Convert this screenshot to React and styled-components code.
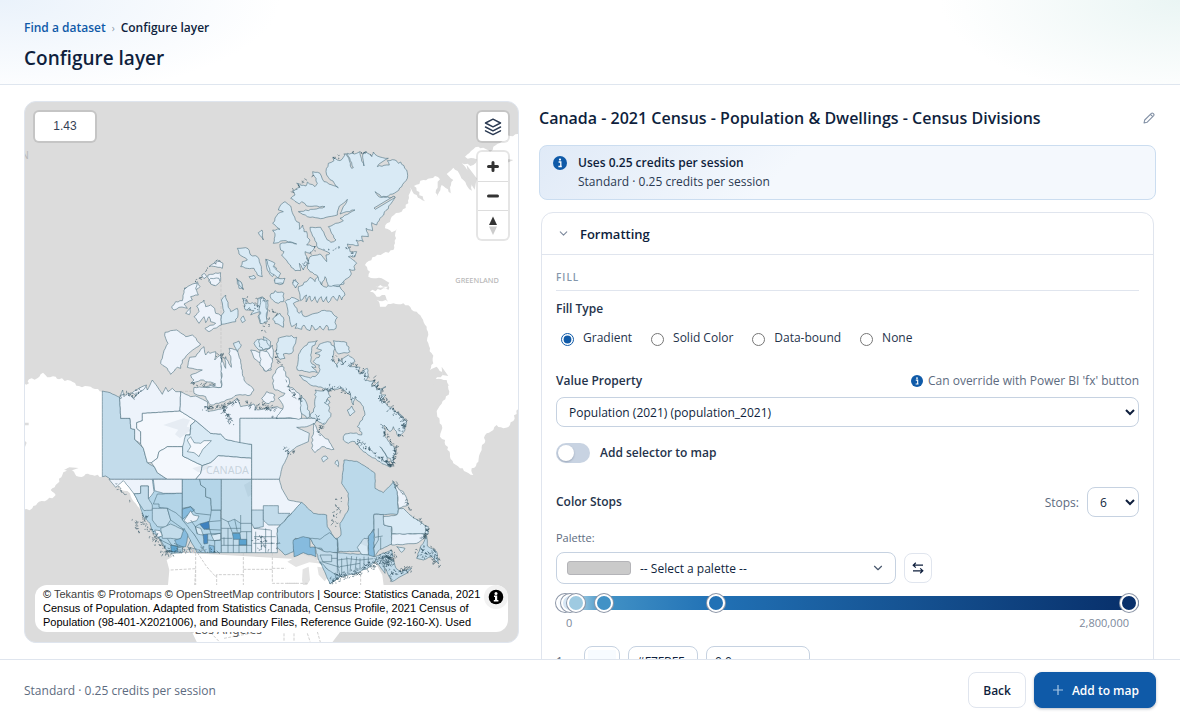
import { useState } from 'react'
import styled, { createGlobalStyle } from 'styled-components'
import { ChevronDown } from 'lucide-react'

const GlobalStyle = createGlobalStyle`
    * {
        box-sizing: border-box;
    }
    body {
        margin: 0;
        background: #ffffff;
        color: #0f1f3d;
        font-family: 'Open Sans', 'Noto Sans', sans-serif;
        font-size: 12px;
    }
    button,
    input,
    select {
        font-family: inherit;
        font-size: inherit;
        color: inherit;
    }
`

const Page = styled.div`
    display: flex;
    flex-direction: column;
    height: 100vh;
    overflow: hidden;
`

const Header = styled.header`
    flex: none;
    padding: 19px 24px 12px;
    border-bottom: 1px solid #dfe6ef;
    background:
        radial-gradient(ellipse 280px 100px at 0 0, #eaf2fb, transparent),
        radial-gradient(ellipse 240px 100px at 100% 0, #eaf5f4, transparent),
        #ffffff;
`

const Breadcrumb = styled.nav`
    display: flex;
    gap: 6px;
    line-height: 18px;
    font-weight: 600;
`

const BreadcrumbLink = styled.a`
    color: #0f5aa8;
    text-decoration: none;
`

const BreadcrumbMark = styled.span`
    color: #8b98aa;
    font-size: 10px;
    font-weight: 400;
`

const PageTitle = styled.h1`
    margin: 7px 0 0;
    font-size: 19px;
    line-height: 28px;
    font-weight: 600;
`

const Main = styled.main`
    flex: 1;
    min-height: 0;
    display: grid;
    grid-template-columns: 495fr 617fr;
    gap: 20px;
    padding: 16px 24px 0;
`

const MapFrame = styled.section`
    position: relative;
    margin-bottom: 16px;
    border: 1px solid #dfe5ee;
    border-radius: 12px;
    overflow: hidden;
    background: #dcdcdc;
`

const MapDrawing = styled.svg`
    display: block;
    position: absolute;
    inset: 0;
    width: 100%;
    height: 100%;
`

const ZoomReadout = styled.output`
    position: absolute;
    top: 10px;
    left: 10px;
    width: 60px;
    border-radius: 4px;
    box-shadow: 0 0 0 2px #c5c5c5;
    background: #ffffff;
    color: #334155;
    font: 12px/29px 'Liberation Sans', Arial, sans-serif;
    text-align: center;
`

const MapControls = styled.div`
    position: absolute;
    top: 10px;
    right: 10px;
    display: flex;
    flex-direction: column;
    gap: 11px;
`

const ControlGroup = styled.div`
    display: flex;
    flex-direction: column;
    border-radius: 4px;
    background: #ffffff;
    box-shadow: 0 0 0 2px rgba(0, 0, 0, 0.1);
`

const ControlButton = styled.button`
    display: flex;
    align-items: center;
    justify-content: center;
    width: 30px;
    height: 29px;
    padding: 0;
    border: 0;
    background: transparent;
    & + & {
        border-top: 1px solid #dddddd;
    }
`

const Attribution = styled.div`
    position: absolute;
    left: 10px;
    right: 10px;
    bottom: 10px;
    height: 47px;
    padding: 2px 24px 2px 8px;
    border-radius: 12px;
    background: #ffffff;
    color: #000000;
    font: 11px/14px 'Liberation Sans', Arial, sans-serif;
    overflow: hidden;
    a {
        color: #404040;
        text-decoration: none;
    }
`

const AttributionToggle = styled.button`
    position: absolute;
    top: 0;
    right: 0;
    width: 24px;
    height: 24px;
    padding: 4px;
    border: 0;
    border-radius: 12px;
    background: #f2f2f2;
    svg {
        display: block;
    }
`

const Settings = styled.section`
    min-height: 0;
    overflow-y: auto;
    scrollbar-width: none;
`

const LayerHeading = styled.div`
    display: flex;
    align-items: center;
    justify-content: space-between;
    height: 34px;
`

const LayerTitle = styled.h2`
    margin: 0;
    font-size: 16px;
    line-height: 24px;
    font-weight: 600;
    white-space: nowrap;
`

const IconButton = styled.button`
    display: flex;
    padding: 1px;
    border: 0;
    background: transparent;
    color: #8290a5;
`

const CreditCard = styled.div`
    display: flex;
    gap: 11px;
    margin-top: 10px;
    padding: 7px 13px 8px;
    border: 1px solid #cbddf0;
    border-radius: 8px;
    background: linear-gradient(135deg, #e0eaf7, #f4f8fd 40%);
    line-height: 19px;
`

const CreditIcon = styled.span`
    display: flex;
    align-items: center;
    height: 19px;
`

const CreditTitle = styled.div`
    font-weight: 600;
`

const CreditText = styled.div`
    color: #2b3a52;
`

const Panel = styled.section`
    margin: 12px 2px 0;
    border: 1px solid #e0e5ee;
    border-radius: 12px;
`

const PanelToggle = styled.button`
    display: flex;
    align-items: center;
    gap: 10px;
    width: 100%;
    height: 42px;
    padding: 0 15px;
    border: 0;
    border-bottom: 1px solid #e0e5ee;
    background: transparent;
    font-size: 13px;
    font-weight: 600;
    svg {
        color: #7d8a9d;
    }
`

const PanelBody = styled.div`
    padding: 14px 14px 0;
`

const GroupTitle = styled.h3`
    margin: 0 0 8px;
    padding-bottom: 5px;
    border-bottom: 1px solid #e0e5ee;
    color: #8496ab;
    font-size: 10px;
    line-height: 16px;
    font-weight: 600;
    letter-spacing: 1px;
`

const Label = styled.label`
    display: block;
    color: #25334b;
    line-height: 20px;
    font-weight: 600;
`

const FillTypes = styled.fieldset`
    display: flex;
    gap: 14px;
    margin: 0;
    padding: 0;
    border: 0;
`

const Legend = styled.legend`
    padding: 0;
    color: #25334b;
    line-height: 20px;
    font-weight: 600;
`

const RadioLabel = styled.label`
    display: flex;
    gap: 9px;
    margin-top: 9px;
    padding-left: 5px;
    line-height: 20px;
    color: #25334b;
`

const Radio = styled.input`
    width: 13px;
    height: 13px;
    margin: 5px 0 0;
    accent-color: #0f5aa8;
`

const FieldRow = styled.div`
    display: flex;
    align-items: center;
    justify-content: space-between;
    margin-top: ${(props) => props.$top}px;
`

const Hint = styled.span`
    display: flex;
    align-items: center;
    gap: 5px;
    color: #5d6b80;
    line-height: 20px;
`

const Select = styled.select`
    width: ${(props) => (props.$small ? '52px' : '100%')};
    height: 30px;
    padding: 0 4px 0 8px;
    border: 1px solid #c6d2e1;
    border-radius: 8px;
    background: #ffffff;
    color: #0f1f3d;
`

const SwitchLabel = styled.label`
    display: flex;
    align-items: center;
    gap: 10px;
    margin-top: 16px;
    color: #25334b;
    line-height: 20px;
    font-weight: 600;
`

const Switch = styled.input`
    appearance: none;
    display: flex;
    width: 34px;
    height: 20px;
    margin: 0;
    padding: 2px;
    border-radius: 10px;
    background: ${(props) => (props.checked ? '#0f5aa8' : '#c8d3e2')};
    &::before {
        content: '';
        width: 16px;
        height: 16px;
        margin-left: ${(props) => (props.checked ? '14px' : '0')};
        border-radius: 50%;
        background: #ffffff;
        box-shadow: 0 1px 2px rgba(15, 31, 61, 0.25);
    }
`

const StopsLabel = styled.label`
    display: flex;
    align-items: center;
    gap: 8px;
    color: #5d6b80;
`

const PaletteLabel = styled.div`
    margin-top: 12px;
    color: #5d6b80;
    font-size: 11px;
    line-height: 18px;
`

const PaletteRow = styled.div`
    display: flex;
    align-items: center;
    gap: 8px;
    margin-top: 5px;
`

const PaletteButton = styled.button`
    display: flex;
    align-items: center;
    gap: 9px;
    width: 340px;
    height: 32px;
    padding: 0 10px;
    border: 1px solid #c6d2e1;
    border-radius: 8px;
    background: #ffffff;
    text-align: left;
    svg {
        margin-left: auto;
        color: #4a586e;
    }
`

const PaletteSwatch = styled.span`
    width: 64px;
    height: 14px;
    border: 1px solid #b4b4b8;
    border-radius: 3px;
    background: #cacaca;
`

const SwapButton = styled.button`
    display: flex;
    align-items: center;
    justify-content: center;
    width: 28px;
    height: 30px;
    padding: 0;
    border: 1px solid #e0e5ee;
    border-radius: 8px;
    background: #ffffff;
`

const GradientTrack = styled.div`
    position: relative;
    height: 14px;
    margin: 12px 0 0;
    border-radius: 7px;
    background: linear-gradient(
        90deg,
        #f7fbff 2%,
        #9ecae1 4%,
        #4292c6 8%,
        #2171b5 27%,
        #08306b 98%
    );
`

const StopHandle = styled.button`
    position: absolute;
    top: -2px;
    width: 18px;
    height: 18px;
    margin-left: -9px;
    padding: 0;
    border: 2px solid #ffffff;
    border-radius: 50%;
    box-shadow: 0 0 0 1px #8d97a8;
`

const TrackScale = styled.div`
    display: flex;
    justify-content: space-between;
    margin-top: 5px;
    padding: 0 10px;
    color: #7c899b;
    font-size: 11px;
    line-height: 16px;
`

const StopRow = styled.div`
    display: grid;
    grid-template-columns: 20px 36px 70px 104px;
    gap: 8px;
    align-items: center;
    margin-top: 15px;
    padding-bottom: 12px;
    color: #5d6b80;
`

const StopInput = styled.input`
    width: 100%;
    height: 30px;
    padding: ${(props) => (props.type === 'color' ? '3px' : '0 8px')};
    border: 1px solid #c6d2e1;
    border-radius: 8px;
    background: #ffffff;
    color: #0f1f3d;
    &::-webkit-color-swatch-wrapper {
        padding: 0;
    }
    &::-webkit-color-swatch {
        border: 0;
    }
`

const Footer = styled.footer`
    flex: none;
    display: flex;
    align-items: center;
    gap: 8px;
    height: 61px;
    padding: 0 24px;
    border-top: 1px solid #dfe5ee;
    background: #ffffff;
`

const FooterText = styled.span`
    margin-right: auto;
    color: #5d6b80;
`

const FooterButton = styled.button`
    display: flex;
    align-items: center;
    gap: 9px;
    height: 36px;
    padding: ${(props) => (props.$primary ? '0 16px' : '0 14px')};
    border: 1px solid ${(props) => (props.$primary ? '#0f5aa8' : '#e0e5ee')};
    border-radius: 8px;
    background: ${(props) => (props.$primary ? '#0f5aa8' : '#ffffff')};
    color: ${(props) => (props.$primary ? '#ffffff' : '#0f1f3d')};
    box-shadow: ${(props) =>
        props.$primary ? '0 1px 3px rgba(15, 31, 61, 0.3)' : 'none'};
    font-weight: 600;
    svg {
        margin-left: 2px;
    }
`

const PALE = '#f4f8fd'
const LIGHT = '#edf3fb'
const SOFT = '#d9eaf5'
const MILD = '#c3dceb'
const MID = '#b4d5e8'
const DEEP = '#86bbde'
const STRONG = '#5ba3d0'

// small repeatable generator so the coast never changes between renders
function random(seed) {
    let s = seed * 7919 + 13
    return () => {
        s = (s * 16807) % 2147483647
        return s / 2147483647
    }
}

function parse(points) {
    return points.split(' ').map((pair) => pair.split(',').map(Number))
}

// closed outline with small inlets between the given points
function coast(points, amp = 3, seed = 1) {
    const next = random(seed)
    const list = parse(points)
    const out = []
    list.forEach(([x, y], i) => {
        const [x2, y2] = list[(i + 1) % list.length]
        const length = Math.hypot(x2 - x, y2 - y)
        const steps = Math.max(1, Math.round(length / 8))
        out.push([x, y])
        for (let k = 1; k < steps; k++) {
            const off = (next() - 0.5) * 2 * amp
            out.push([
                Math.round(x + ((x2 - x) * k) / steps - ((y2 - y) / length) * off),
                Math.round(y + ((y2 - y) * k) / steps + ((x2 - x) / length) * off),
            ])
        }
    })
    return 'M' + out.map((p) => p.join(',')).join(' ') + 'Z'
}

// short dark strokes for skerries and narrow fjords
function flecks(points, spread, count, seed) {
    const next = random(seed)
    const list = parse(points)
    let d = ''
    for (let i = 0; i < count; i++) {
        const at = next() * (list.length - 1)
        const k = Math.floor(at)
        const t = at - k
        const x = list[k][0] + (list[k + 1][0] - list[k][0]) * t
        const y = list[k][1] + (list[k + 1][1] - list[k][1]) * t
        const px = Math.round(x + (next() - 0.5) * spread)
        const py = Math.round(y + (next() - 0.5) * spread)
        d += `M${px},${py}l${Math.round((next() - 0.5) * 12)},${Math.round((next() - 0.5) * 12)}l${Math.round((next() - 0.5) * 8)},${Math.round((next() - 0.5) * 8)}`
    }
    return d
}

const islandsNorth = [
    // Ellesmere
    [SOFT, '198,215 205,190 222,182 218,172 240,182 250,172 258,160 268,182 275,205 280,203 262,160 290,160 300,155 304,175 312,198 308,165 316,155 335,168 340,156 352,168 385,175 360,190 352,200 372,196 388,195 382,182 405,180 415,190 422,186 440,210 442,235 425,260 410,275 385,288 365,292 345,275 360,292 405,292 392,312 365,350 350,375 335,368 338,392 318,385 325,410 305,408 310,425 288,420 295,437 262,432 270,455 290,455 285,470 265,470 290,490 282,500 285,510 268,508 274,522 262,535 250,545 240,555 205,558 195,530 185,555 170,525 150,515 142,505 150,470 180,462 200,485 198,465 210,460 175,445 155,400 150,382 182,382 202,420 212,427 228,420 215,400 205,380 250,362 240,355 285,330 250,338 240,342 262,298 238,318 232,345 190,355 150,352 115,335 160,328 195,320 140,318 125,305 118,312 92,295 105,285 98,272 120,262 110,250 138,258 142,246 165,260 172,250 158,215 180,220 192,245 235,263 200,225'],
    // Axel Heiberg
    [SOFT, '62,315 75,305 92,318 100,345 110,365 118,368 118,388 128,375 132,395 140,395 142,412 150,420 140,435 165,440 150,460 135,455 145,485 130,510 118,490 122,512 105,512 85,490 65,465 72,455 62,450 60,432 90,425 110,432 70,422 40,430 45,400 38,390 60,388 38,370 55,340 70,335 55,330'],
    [SOFT, '18,478 45,490 40,500 62,520 55,535 30,515'],
    [SOFT, '45,535 75,535 70,550 45,550'],
    [SOFT, '100,540 115,550 108,563 98,552'],
]

const islandsWest = [
    [LIGHT, '555,500 570,490 580,480 597,490 595,505 575,500'],
    [LIGHT, '552,525 590,518 590,540 572,557 555,545'],
    [LIGHT, '533,525 541,520 548,530 540,536'],
    [LIGHT, '480,565 500,560 520,545 528,560 512,572 500,580'],
    [SOFT, '640,445 665,443 676,452 680,465 700,470 712,500 715,530 700,525 690,505 670,505 650,500 655,485 670,480 645,462'],
    [SOFT, '703,398 714,390 718,420'],
    [SOFT, '725,478 740,490 758,505 745,530 730,510'],
    [SOFT, '638,535 652,548 658,568 645,565'],
    [SOFT, '675,530 690,526 695,534 680,537'],
]

const islandsCentral = [
    // Banks
    [LIGHT, '423,157 458,150 475,162 485,170 505,165 530,192 500,215 475,240 470,265 460,262 440,283 430,265 410,250 418,220 432,190 425,175'],
    [LIGHT, '530,208 540,200 545,225 552,215 558,220 575,215 572,240 592,220 592,322 540,322 575,312 530,300 500,310 510,300 500,285 535,270 490,262 497,232 515,230'],
    [LIGHT, '592,235 605,265 605,230 622,262 615,205 640,210 650,240 655,280 660,300 690,330 680,345 640,345 600,365 560,375 545,350 520,345 510,340 510,322 592,322'],
    [SOFT, '628,190 645,183 652,195 640,215 635,205'],
    [LIGHT, '510,110 525,95 518,78 540,60 545,80 560,75 572,85 575,100 592,108 592,135 555,155 543,145 575,130 560,125 555,110 545,128 540,110 525,130'],
    [SOFT, '592,105 600,95 592,60 605,45 612,75 620,95 640,85 642,105 635,125 610,130 592,133'],
    [LIGHT, '443,80 455,65 475,62 480,30 500,15 520,10 515,25 523,45 500,50 505,60 480,72 490,85 465,82 450,90'],
    [LIGHT, '555,0 560,12 575,17 588,5 585,-5 560,-5'],
    [SOFT, '640,0 645,15 658,28 650,5'],
    [SOFT, '655,55 670,60 665,72 685,68 700,80 702,55 715,50 725,65 732,60 728,122 710,130 702,110 706,95 680,105 690,92 665,90'],
    [SOFT, '650,118 658,108 664,122 655,128'],
    [LIGHT, '680,210 700,215 715,225 745,195 748,225 740,255 742,270 720,272 712,250 690,235'],
    [SOFT, '690,190 700,178 720,180 718,170 740,185 738,205 705,210'],
    [LIGHT, '485,100 500,82 496,104'],
    [LIGHT, '322,340 340,328 368,315 360,328 335,345'],
]

const islandsEast = [
    [SOFT, '115,20 140,5 150,-8 165,5 175,-15 185,15 200,22 215,12 240,20 255,45 245,60 238,45 232,62 220,48 205,68 200,50 190,66 184,50 172,68 165,50 155,64 150,48 138,66 140,45 122,62'],
    [SOFT, '205,0 245,-5 252,12 235,20 212,12'],
    [SOFT, '80,60 95,52 118,62 100,70 105,80 118,100 125,92 130,108 150,105 165,100 185,92 215,95 232,112 225,128 228,145 205,150 200,135 190,150 180,138 165,150 155,135 150,152 140,148 132,135 125,148 105,145 110,130 95,140 88,110 75,65'],
    [SOFT, '30,48 45,32 72,40 70,65 55,70 38,60'],
    [SOFT, '0,52 18,60 22,125 0,130'],
    [SOFT, '38,118 60,100 72,120 70,142 45,130'],
    [SOFT, '-2,178 20,180 30,200 10,210 -2,200'],
    [LIGHT, '0,212 22,215 36,235 34,262 18,275 0,255'],
    [SOFT, '42,0 70,0 68,12 50,10'],
    [SOFT, '98,8 106,-2 114,10 106,24'],
    [SOFT, '55,175 80,168 110,172 95,220 70,222 75,235 60,238 48,215'],
    // Baffin
    [SOFT, '170,205 185,190 212,187 225,205 218,230 232,262 235,235 252,252 246,238 265,225 285,245 270,260 300,262 298,282 322,265 325,285 315,302 345,300 335,320 355,305 350,330 378,320 360,340 378,345 365,360 385,380 415,400 440,425 435,450 415,470 400,440 390,455 372,435 375,470 405,510 400,550 360,500 395,560 360,545 330,528 310,515 285,485 265,490 250,480 255,462 280,460 305,465 300,445 292,440 315,405 310,380 285,350 280,375 272,345 262,340 240,325 215,330 190,325 160,318 130,300 118,285 145,292 165,290 178,275 178,255 160,245 180,225 165,220 185,210'],
    [SOFT, '145,187 172,182 155,205 152,225 152,245 168,262 155,260 172,278 140,275 112,270 115,230 128,205'],
    [SOFT, '220,182 260,188 270,215 235,222 225,205'],
    [LIGHT, '40,285 60,260 72,262 78,290 88,300 84,318 105,330 120,345 124,380 124,415 50,415 70,380 55,355 75,340 45,330 38,310'],
    [LIGHT, '5,355 20,335 45,345 40,365 20,370'],
    [SOFT, '124,345 138,365 150,410 140,415 124,400'],
    [SOFT, '165,330 205,330 212,350 200,360 205,375 212,410 190,435 165,415 150,410 165,380 168,350'],
    [SOFT, '262,390 275,378 285,395 270,408'],
    [SOFT, '193,368 202,358 210,368 202,374'],
    [LIGHT, '160,430 170,445 190,470 205,478 222,508 200,505 185,500 165,518 155,505'],
    [SOFT, '185,535 198,528 204,535 190,546'],
    [SOFT, '225,550 232,540 235,560'],
]

const territories = [
    [MILD, '235,333 258,338 287,352 290,415 318,415 320,445 332,448 332,478 358,505 370,548 392,562 400,578 430,598 260,598 245,588 235,590'],
    [LIGHT, '287,352 296,330 300,350 312,338 330,355 345,325 365,318 370,330 385,300 400,320 415,343 425,322 432,335 445,325 455,335 470,335 468,393 355,400 355,422 338,428 338,445 350,455 350,492 332,478 332,448 320,445 318,415 290,415'],
    [PALE, '355,400 468,393 515,422 500,435 498,465 485,465 482,490 476,500 430,500 405,515 400,535 382,548 370,548 358,505 350,492 350,455 338,445 338,428 355,422'],
    [PALE, '382,548 400,535 405,515 430,500 476,500 476,528 535,557 530,580 515,598 430,598 400,578 392,562'],
    [SOFT, '515,422 560,460 590,462 605,478 683,493 683,535 583,527 560,548 535,557 476,528 476,500 485,465 498,465 500,435'],
    [PALE, '490,480 500,470 510,488 530,490 540,482 562,482 535,510 525,530 510,518 490,515 500,500'],
    [LIGHT, '583,527 683,535 683,598 515,598 530,580 535,557 560,548'],
    [LIGHT, '470,335 500,350 515,348 550,365 552,395 600,385 640,355 650,380 690,372 700,390 760,380 833,415 648,415 648,488 605,478 590,462 560,460 515,422 468,393'],
    ['#e4eff8', '648,415 878,415 873,430 848,440 818,442 856,460 853,485 818,500 793,520 788,535 775,560 766,598 683,598 683,493 648,488'],
]

const provinces = [
    // British Columbia
    [MID, '330,100 385,58 475,58 475,278 440,280 425,268 410,240 385,215 378,190 358,170 345,130'],
    [LIGHT, '255,58 385,58 390,95 373,118 373,78 350,78 350,100 330,102 312,78 298,62 275,82'],
    [MILD, '330,102 350,100 350,78 373,78 373,115 385,135 385,150 360,152 345,130'],
    [LIGHT, '388,58 475,58 475,100 418,100 392,92'],
    [MID, '400,102 475,100 475,180 455,165 430,145 405,142 405,132 388,132'],
    [MILD, '385,145 430,145 440,180 425,202 400,200 385,180'],
    [MILD, '410,205 440,192 475,208 485,225 465,238 440,235 415,235'],
    [MID, '430,145 455,158 490,190 512,225 540,262 545,278 520,278 490,225 475,205 440,180'],
    [DEEP, '480,205 492,225 485,260 462,262 452,240 470,235'],
    [STRONG, '440,255 460,258 462,276 442,276'],
    [LIGHT, '392,210 408,212 415,228 400,232'],
    // Alberta
    [MID, '475,58 527,58 530,75 545,85 545,110 560,115 562,150 590,150 592,278 545,278 512,225 475,180'],
    [MID, '527,58 592,58 592,150 562,150 560,115 545,110 545,85 530,75'],
    [DEEP, '475,148 500,140 512,150 492,165 475,178'],
    [LIGHT, '480,182 500,152 508,165 525,168 518,182 490,190'],
    [SOFT, '514,200 530,205 538,225 520,222'],
    ['#3f82bf', '527,192 555,184 556,206 540,208'],
    ['#4a8cc4', '537,224 551,222 551,250 540,252'],
    [SOFT, '562,225 590,220 590,240 570,242'],
    [DEEP, '555,255 570,258 572,278 556,278'],
    // Saskatchewan and Manitoba
    [MILD, '592,58 683,58 683,278 592,278'],
    [STRONG, '625,220 648,220 650,238 628,238'],
    [STRONG, '645,238 668,238 668,255 645,255'],
    [MID, '612,185 632,178 650,190 650,218 625,218'],
    [LIGHT, '683,58 766,58 773,85 793,120 833,128 760,205 760,278 683,278'],
    [MILD, '683,150 718,150 718,200 690,205 683,190'],
    [MILD, '718,137 763,137 763,160 798,160 773,195 733,195 718,180'],
]

const eastern = [
    // Ontario
    [MID, '125,127 160,160 200,165 202,200 225,235 232,235 232,278 168,265 150,235 105,235 100,275 75,285 52,262 52,205'],
    [DEEP, '100,240 130,230 150,235 150,262 165,262 168,290 130,278 102,290'],
    [MID, '150,235 180,238 208,218 232,240 232,278 195,278 185,265 168,265'],
    [MILD, '165,262 195,275 232,278 300,300 290,330 240,350 210,372 205,330 180,310'],
    // Quebec
    ['#bbd9ea', '252,0 290,4 320,22 345,40 345,85 370,98 402,65 412,95 415,163 342,163 342,205 325,230 325,275 235,275 232,235 243,225 240,190 265,150 265,100 245,70 250,30'],
    [MILD, '342,163 370,163 372,195 395,200 395,252 360,268 342,290'],
    [DEEP, '325,230 342,207 342,290 325,290'],
    [SOFT, '292,262 312,235 325,235 325,285 305,285'],
    [MILD, '232,278 325,285 345,290 395,270 400,290 350,300 330,320 290,340 240,350 232,310'],
    // Labrador
    [SOFT, '370,170 410,165 418,145 430,145 450,165 480,185 492,195 505,200 505,222 395,222 395,200 372,195'],
    ['#e6f0fa', '395,222 490,222 492,235 470,250 395,255'],
    [LIGHT, '398,62 410,78 418,90 430,95 440,115 445,135 415,145 412,95'],
    [MILD, '345,300 375,290 400,300 372,312 375,340 360,320'],
    [SOFT, '410,260 435,265 425,277'],
    // Newfoundland and Nova Scotia
    [MILD, '470,295 480,265 500,228 502,258 530,275 536,312 515,290 490,300'],
    [MILD, '372,315 400,300 408,325 425,335 455,325 440,340 395,365 385,345'],
    [MID, '180,305 205,330 240,350 210,372'],
]

// coast lines and dense areas that get flecks: shift, points, spread, count
const fleckRuns = [
    [0, 1080, '355,165 368,190 388,220 400,245 425,272 440,282', 22, 70],
    [0, 1080, '328,180 338,195 345,215', 10, 12],
    [0, 1080, '440,268 480,272 540,270 580,270', 16, 22],
    [0, 1080, '270,70 300,95 330,140', 10, 10],
    [0, 1080, '695,235 720,250 752,255', 40, 24],
    [708, 1080, '210,365 240,350 290,335 330,320 365,300 400,285', 24, 150],
    [708, 1080, '385,355 400,340 430,335 455,325', 16, 36],
    [708, 1080, '375,320 390,305 400,295', 26, 26],
    [708, 1080, '475,290 500,265 520,285 534,308', 26, 50],
    [708, 1080, '402,60 415,90 440,130 460,170 490,190 504,215 490,240', 10, 50],
    [708, 1080, '235,110 235,140 220,200', 18, 20],
    [708, 540, '218,235 290,260 335,300 375,340', 14, 60],
    [708, 540, '360,350 390,380 435,425 420,470', 14, 70],
    [708, 540, '290,480 330,510 370,540 400,560', 9, 60],
    [708, 540, '372,435 380,470 408,510 400,550', 12, 50],
    [708, 540, '190,328 235,320 265,340 295,360', 14, 30],
    [708, 540, '80,310 105,345 118,360', 10, 20],
    [708, 540, '0,375 30,385 48,405', 22, 24],
    [708, 540, '45,200 50,240 70,260', 8, 14],
    [708, 540, '10,155 30,110 50,90', 18, 16],
    [708, 540, '70,495 90,525 105,510', 10, 16],
    [708, 540, '165,415 190,435 175,460', 12, 18],
    [0, 540, '530,385 570,382 600,380 612,410 622,430', 14, 60],
    [0, 540, '600,380 640,360 700,388 748,385', 12, 40],
    [0, 540, '290,352 310,340 330,350 350,325', 10, 22],
    [0, 540, '505,310 540,315 575,315', 8, 14],
    [0, 540, '572,230 590,222 600,235', 10, 12],
    [0, 540, '655,60 690,85 720,60', 20, 18],
    [708, 0, '92,295 105,265 158,230', 8, 12],
    [708, 0, '218,175 262,162 300,158 340,165', 8, 14],
    [708, 0, '130,500 160,450 260,440 290,480', 12, 26],
    [0, 0, '500,550 530,535 548,505 590,480', 6, 12],
]

function Shapes({ list, amp, offset }) {
    return list.map(([fill, points], i) => (
        <path key={i} fill={fill} d={coast(points, amp, i + offset)} />
    ))
}

function CensusMap() {
    return (
        <MapDrawing
            viewBox="3 6 1479 1620"
            preserveAspectRatio="xMidYMid slice"
            role="img"
            aria-label="Census divisions of Canada by population"
        >
            {/* Greenland */}
            <g transform="translate(708 0)" fill="#ffffff">
                <path
                    d={coast(
                        '790,100 750,108 730,112 742,120 700,140 690,155 655,140 615,170 650,178 640,195 605,190 640,230 636,272 610,240 580,203 560,222 580,240 570,262 578,285 545,255 530,292 528,270 540,238 525,228 490,240 462,258 495,304 470,285 450,262 445,310 425,335 395,350 375,385 395,397 412,385 405,430 400,450 370,460 345,470 315,495 330,515 325,530 365,535 388,548 385,570 345,558 385,560 330,575 350,590 375,585 385,605 350,600 360,620 400,610 430,610 470,635 500,680 505,730 515,760 520,790 510,810 530,800 548,825 525,840 560,840 568,875 535,925 532,950 545,975 540,1010 555,1020 570,1070 580,1090 600,1105 640,1125 635,1105 655,1085 660,1060 665,1050 680,1000 700,990 710,975 730,985 750,975 790,900',
                        4,
                        3
                    )}
                />
                <path fill="#dcdcdc" d="M545,800 l20,28 l-18,-3z M523,835 l35,10 l10,12 l-25,-4 l20,18 l-12,22 l-18,-14 l-16,-8 l3,-12z" />
                <path fill="#dcdcdc" d="M620,195 l30,40 l-6,34 l-18,-28z M700,170 l60,10 l-30,14z" />
            </g>
            {/* Alaska and the United States */}
            <g transform="translate(0 540)" fill="#ffffff">
                <path
                    d={coast(
                        '-10,312 15,310 15,298 40,295 57,278 70,292 95,290 105,298 140,302 165,318 200,320 235,335 340,460 235,590 205,585 185,582 165,590 150,575 130,565 115,585 95,615 80,630 95,645 85,655 45,665 25,685 -10,692',
                        4,
                        5
                    )}
                />
                <path
                    d={coast(
                        '240,560 300,560 380,640 365,720 352,700 330,665 318,640 300,632 275,610',
                        4,
                        7
                    )}
                />
                <path d="M436,816 L1055,850 L1075,885 L1080,925 L960,1040 L915,1100 L525,1100 L505,1058 L470,1000 L432,915 L436,870 L428,840 L445,830Z" />
                <path fill="#dcdcdc" d="M0,428h14v8h-14z M0,480l8,8l-6,16z M120,570l16,-8l28,2l-24,8z" />
                <path fill="#e3e3e3" d="M790,845l40,-22l40,10l22,18l-36,-4l-40,14z M836,868l18,-8l4,40l-18,30l-6,-30z M880,860l26,4l10,22l-14,18l-18,-20z" />
                <g fill="none" stroke="#cfcfcf" strokeWidth="3" strokeDasharray="9 4">
                    <path d="M440,870 515,866 512,915 M515,818 515,915 M520,818 548,860 575,890 578,884 658,884 M658,818 658,915 M658,868 745,868 M578,884 578,915 M745,818 745,910 820,910 M745,865 785,865 M790,910 850,910 860,1000 M1010,870 1010,915" />
                    <path d="M500,1058 520,1058 M600,1075 680,1060 M780,1060 780,1100 M810,1060 810,1100 M850,1060 860,1090 M880,1055 890,1090 M560,1058 600,1100" />
                </g>
            </g>
            <path
                d="M591,540V870 M470,874H540"
                fill="none"
                stroke="#cbcbcb"
                strokeWidth="3"
                strokeDasharray="9 4"
            />
            <g stroke="#4f7282" strokeWidth="2" strokeOpacity="0.9" strokeLinejoin="round">
                <g transform="translate(0 540)">
                    <Shapes list={territories} amp={0} offset={10} />
                </g>
                <g transform="translate(0 1080)">
                    <Shapes list={provinces} amp={0} offset={30} />
                    <g fill="none">
                        <path d="M592,175 612,185 M592,205H650 M592,235H625 M592,256H683 M650,190H683 M650,215H683 M668,215V278 M628,238V278 M612,205V278 M645,255V278 M600,232V256 M650,165 650,190 M632,178 640,215" />
                        <path d="M475,145 500,140 515,160 560,165 562,150 M560,165 556,185 590,182 M527,192 514,200 M545,208 590,210 M551,222 590,220 M551,240 572,242 590,240 M572,242 572,278 M556,205 562,225 M500,180 514,200 520,222" />
                        <path d="M690,205 740,210 M695,215V278 M712,230V270 M725,205V278 M742,210V278 M690,230H755 M688,250H752" />
                        <path d="M405,235 418,260 M430,236 445,258 M450,250 480,262 M410,240 440,255 470,262 M490,262 500,240 M500,278 492,262 520,268" />
                    </g>
                </g>
                <g transform="translate(708 1080)">
                    <Shapes list={eastern} amp={1} offset={50} />
                    <g fill="none">
                        <path d="M180,285H215V305H188Z M232,278V340 M245,295V345 M260,290 264,340 M275,288 270,335 M290,290 285,335 M300,295V330 M312,290V325 M325,290V318 M215,295H232 M185,305 240,322 M232,300 264,296 300,300 M240,320 300,310 M340,265 355,240 355,205 M362,268V232 M345,232 368,228 M300,300 340,296" />
                    </g>
                </g>
                <Shapes list={islandsWest} amp={2} offset={70} />
                <g transform="translate(0 540)">
                    <Shapes list={islandsCentral} amp={2} offset={90} />
                </g>
                <g transform="translate(708 540)">
                    <Shapes list={islandsEast} amp={3} offset={110} />
                </g>
                <g transform="translate(708 0)">
                    <Shapes list={islandsNorth} amp={2} offset={130} />
                    <path fill="#dcdcdc" d="M342,324 l60,-36 l4,4 l-60,36z" />
                </g>
            </g>
            {/* skerries, fjords and the small southern divisions */}
            <g fill="none" stroke="#27485a" strokeWidth="2" strokeOpacity="0.75">
                {fleckRuns.map(([dx, dy, points, spread, count], i) => (
                    <path
                        key={i}
                        transform={`translate(${dx} ${dy})`}
                        d={flecks(points, spread, count, i + 4)}
                    />
                ))}
            </g>
            {/* lakes under the fill */}
            <g fill="#5c7d8d" fillOpacity="0.09">
                <path d="M418,975 l60,-20 l20,5 l-10,20 l20,5 l-40,30 l-15,-12 l10,-14z" />
                <path d="M505,1105 l40,-12 l18,8 l-40,16z M660,1155l20,-12l4,40l-12,8z M1006,1330l24,-20l0,30z" />
            </g>
            <g fontFamily="'Noto Sans', sans-serif" fill="#b9b9b9">
                <text x="546" y="1122" fontSize="32" fill="#aebdc8" fillOpacity="0.6">
                    CANADA
                </text>
                <text x="1294" y="550" fontSize="22" fontWeight="500">
                    GREENLAND
                </text>
                <text x="450" y="1360" fontSize="20" fill="#6f8796" fillOpacity="0.6">
                    Vancouver
                </text>
                <text x="512" y="1602" fontSize="36" fill="#5f5f5f">
                    Los Angeles
                </text>
                <text x="-8" y="176" fontSize="30">
                    N
                </text>
            </g>
        </MapDrawing>
    )
}

function InfoDot({ size }) {
    return (
        <svg width={size} height={size} viewBox="0 0 14 14" aria-hidden="true">
            <circle cx="7" cy="7" r="7" fill="#0f5aa8" />
            <circle cx="7" cy="3.6" r="1.1" fill="#ffffff" />
            <path d="M5.6 6H7.8V10.4M5.4 10.5H8.8" stroke="#ffffff" strokeWidth="1.3" fill="none" />
        </svg>
    )
}

const fillTypes = ['Gradient', 'Solid Color', 'Data-bound', 'None']

const stops = [
    { at: 1.6, color: '#f7fbff' },
    { at: 2.4, color: '#d6e6f4' },
    { at: 3.4, color: '#9ecae1' },
    { at: 8.2, color: '#4292c6' },
    { at: 27.4, color: '#2171b5' },
    { at: 98.3, color: '#08306b' },
]

function App() {
    const [fillType, setFillType] = useState('Gradient')
    const [selector, setSelector] = useState(false)
    const [count, setCount] = useState('6')
    const [open, setOpen] = useState(true)

    return (
        <Page>
            <GlobalStyle />
            <Header>
                <Breadcrumb aria-label="Breadcrumb">
                    <BreadcrumbLink href="#datasets">Find a dataset</BreadcrumbLink>
                    <BreadcrumbMark>›</BreadcrumbMark>
                    <span>Configure layer</span>
                </Breadcrumb>
                <PageTitle>Configure layer</PageTitle>
            </Header>
            <Main>
                <MapFrame>
                    <CensusMap />
                    <ZoomReadout>1.43</ZoomReadout>
                    <MapControls>
                        <ControlGroup>
                            <ControlButton aria-label="Layers">
                                <svg width="18" height="18" viewBox="0 0 18 18" fill="none" stroke="#2b3a52" strokeWidth="1.5" strokeLinejoin="round" strokeLinecap="round">
                                    <path d="M9 1.2 16.5 5 9 8.8 1.5 5Z M1.5 9 9 12.8 16.5 9 M1.5 12.8 9 16.6 16.5 12.8" />
                                </svg>
                            </ControlButton>
                        </ControlGroup>
                        <ControlGroup>
                            <ControlButton aria-label="Zoom in">
                                <svg width="12" height="11" viewBox="0 0 12 11" stroke="#333333" strokeWidth="3" strokeLinecap="round">
                                    <path d="M6 1.5V9.5M1.5 5.5H10.5" />
                                </svg>
                            </ControlButton>
                            <ControlButton aria-label="Zoom out">
                                <svg width="12" height="4" viewBox="0 0 12 4" stroke="#333333" strokeWidth="3" strokeLinecap="round">
                                    <path d="M1.5 2H10.5" />
                                </svg>
                            </ControlButton>
                            <ControlButton aria-label="Reset north">
                                <svg width="10" height="19" viewBox="0 0 10 19">
                                    <path d="M1 9 5 0.5 9 9Z" fill="#333333" />
                                    <path d="M1 10.5 5 19 9 10.5Z" fill="#cccccc" />
                                </svg>
                            </ControlButton>
                        </ControlGroup>
                    </MapControls>
                    <Attribution>
                        © <a href="#tekantis">Tekantis</a> © <a href="#protomaps">Protomaps</a> ©{' '}
                        <a href="#osm">OpenStreetMap contributors</a> | Source: Statistics Canada,
                        2021 Census of Population. Adapted from Statistics Canada, Census Profile,
                        2021 Census of Population (98-401-X2021006), and Boundary Files, Reference
                        Guide (92-160-X). Used
                        <AttributionToggle aria-label="Toggle attribution">
                            <svg width="16" height="16" viewBox="0 0 16 16">
                                <circle cx="8" cy="8" r="7.3" />
                                <circle cx="8" cy="4.4" r="1.5" fill="#ffffff" />
                                <path d="M6 6.6H9.2V11H10.4V12.4H5.8V11H7V8H6Z" fill="#ffffff" />
                            </svg>
                        </AttributionToggle>
                    </Attribution>
                </MapFrame>
                <Settings>
                    <LayerHeading>
                        <LayerTitle>
                            Canada - 2021 Census - Population &amp; Dwellings - Census Divisions
                        </LayerTitle>
                        <IconButton aria-label="Rename layer">
                            <svg width="12" height="12" viewBox="0 0 12 12" fill="none" stroke="currentColor" strokeWidth="1.1" strokeLinejoin="round">
                                <path d="M1 11 1.7 8 8.4 1.3Q9.2 .6 10 1.3L10.7 2Q11.4 2.8 10.7 3.6L4 10.3Z M7.4 2.3 9.7 4.6" />
                            </svg>
                        </IconButton>
                    </LayerHeading>
                    <CreditCard>
                        <CreditIcon>
                            <InfoDot size={14} />
                        </CreditIcon>
                        <div>
                            <CreditTitle>Uses 0.25 credits per session</CreditTitle>
                            <CreditText>Standard · 0.25 credits per session</CreditText>
                        </div>
                    </CreditCard>
                    <Panel>
                        <PanelToggle aria-expanded={open} onClick={() => setOpen(!open)}>
                            <ChevronDown size={13} />
                            Formatting
                        </PanelToggle>
                        {open ? (
                            <PanelBody>
                                <GroupTitle>FILL</GroupTitle>
                                <FillTypes>
                                    <Legend>Fill Type</Legend>
                                    {fillTypes.map((type) => (
                                        <RadioLabel key={type}>
                                            <Radio
                                                type="radio"
                                                name="fill-type"
                                                checked={fillType === type}
                                                onChange={() => setFillType(type)}
                                            />
                                            {type}
                                        </RadioLabel>
                                    ))}
                                </FillTypes>
                                <FieldRow $top={23}>
                                    <Label htmlFor="value-property">Value Property</Label>
                                    <Hint>
                                        <InfoDot size={12} />
                                        Can override with Power BI 'fx' button
                                    </Hint>
                                </FieldRow>
                                <FieldRow $top={6}>
                                    <Select id="value-property">
                                        <option>Population (2021) (population_2021)</option>
                                    </Select>
                                </FieldRow>
                                <SwitchLabel>
                                    <Switch
                                        type="checkbox"
                                        role="switch"
                                        checked={selector}
                                        onChange={(event) => setSelector(event.target.checked)}
                                    />
                                    Add selector to map
                                </SwitchLabel>
                                <FieldRow $top={24}>
                                    <Label as="span">Color Stops</Label>
                                    <StopsLabel>
                                        Stops:
                                        <Select
                                            $small
                                            value={count}
                                            onChange={(event) => setCount(event.target.value)}
                                        >
                                            <option>5</option>
                                            <option>6</option>
                                            <option>7</option>
                                        </Select>
                                    </StopsLabel>
                                </FieldRow>
                                <PaletteLabel>Palette:</PaletteLabel>
                                <PaletteRow>
                                    <PaletteButton aria-haspopup="listbox">
                                        <PaletteSwatch />
                                        -- Select a palette --
                                        <ChevronDown size={14} />
                                    </PaletteButton>
                                    <SwapButton aria-label="Reverse palette">
                                        <svg width="12" height="12" viewBox="0 0 12 12" fill="none" stroke="#0f1f3d" strokeWidth="1.2">
                                            <path d="M11 3.2H1.4M3.8 .8 1.2 3.2 3.8 5.6M1 8.8H10.6M8.2 6.4 10.8 8.8 8.2 11.2" />
                                        </svg>
                                    </SwapButton>
                                </PaletteRow>
                                <GradientTrack>
                                    {stops.map((stop) => (
                                        <StopHandle
                                            key={stop.at}
                                            aria-label={`Stop ${stop.color}`}
                                            style={{ left: `${stop.at}%`, background: stop.color }}
                                        />
                                    ))}
                                </GradientTrack>
                                <TrackScale>
                                    <span>0</span>
                                    <span>2,800,000</span>
                                </TrackScale>
                                <StopRow>
                                    <span>1</span>
                                    <StopInput type="color" aria-label="Stop color" defaultValue="#f7fbff" />
                                    <StopInput aria-label="Stop hex" defaultValue="#F7FBFF" />
                                    <StopInput aria-label="Stop value" defaultValue="0.0" />
                                </StopRow>
                            </PanelBody>
                        ) : null}
                    </Panel>
                </Settings>
            </Main>
            <Footer>
                <FooterText>Standard · 0.25 credits per session</FooterText>
                <FooterButton>Back</FooterButton>
                <FooterButton $primary>
                    <svg width="10" height="10" viewBox="0 0 10 10" stroke="#a9c8e6" strokeWidth="1.2">
                        <path d="M5 0V10M0 5H10" />
                    </svg>
                    Add to map
                </FooterButton>
            </Footer>
        </Page>
    )
}

export default App
